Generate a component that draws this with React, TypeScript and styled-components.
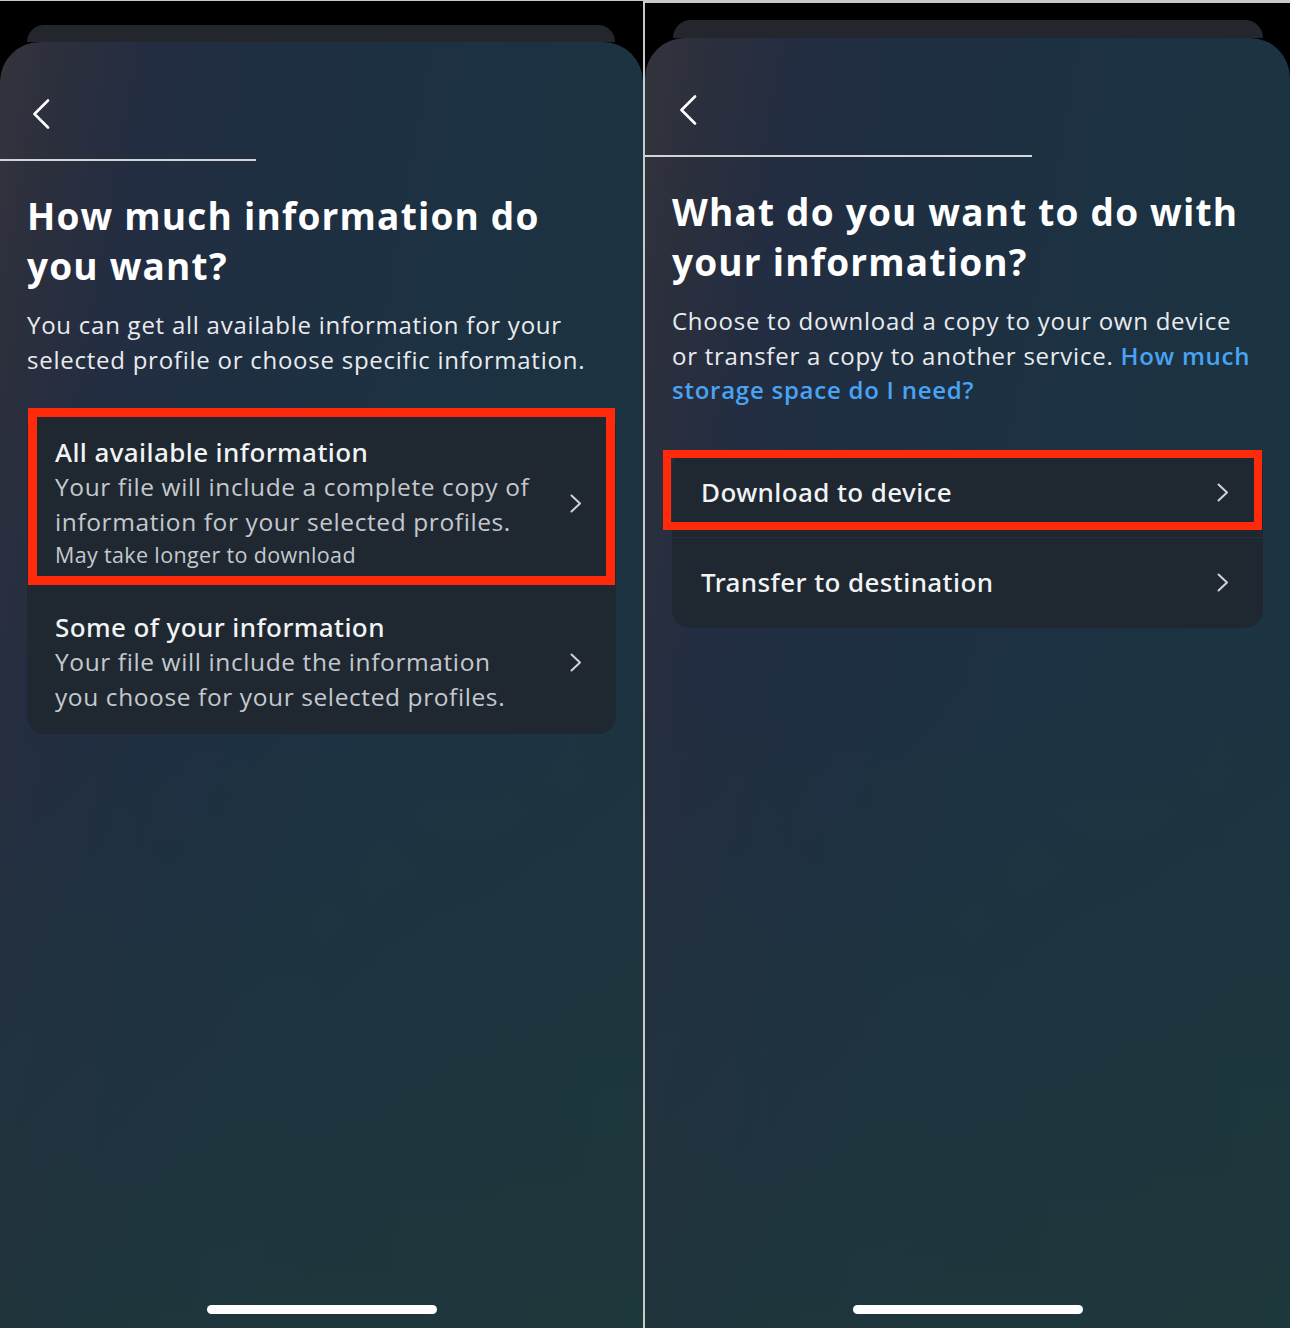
import React from "react";
import styled, { createGlobalStyle } from "styled-components";

const Global = createGlobalStyle`
  html, body { margin: 0; padding: 0; background: #c9c9c9; }
  body { font-family: "Open Sans", "Noto Sans", Arial, sans-serif; -webkit-font-smoothing: antialiased; }
`;

const Page = styled.main`
  display: flex;
  gap: 2px;
  width: 1290px;
  height: 1328px;
  background: #c9c9c9;
  overflow: hidden;
`;

const Panel = styled.section<{ $width: number; $top: number; $gapTop: number }>`
  width: ${(p) => p.$width}px;
  margin-top: ${(p) => p.$top}px;
  display: flex;
  flex-direction: column;
  background: #000;
  padding-top: ${(p) => p.$gapTop}px;
  box-sizing: border-box;
`;

const BackSheet = styled.div<{ $left: number; $right: number; $h: number }>`
  height: ${(p) => p.$h}px;
  margin: 0 ${(p) => p.$right}px 0 ${(p) => p.$left}px;
  background: #23272d;
  border-radius: 18px 18px 0 0;
`;

const Sheet = styled.div`
  flex: 1;
  display: flex;
  flex-direction: column;
  border-radius: 40px 40px 0 0;
  overflow: hidden;
  background:
    linear-gradient(180deg, rgba(0, 0, 0, 0) 50%, rgba(32, 62, 52, 0.4) 100%),
    linear-gradient(100deg, #33343c 0%, #2b2f3d 8%, #232d41 18%, #1e2f42 36%, #1c3242 60%, #1c3440 100%);
`;

const Header = styled.div<{ $left: number }>`
  height: 28px;
  padding: 58px 0 0 ${(p) => p.$left}px;
  display: flex;
  align-items: center;
`;

const Progress = styled.div<{ $width: number }>`
  width: ${(p) => p.$width}px;
  height: 2px;
  margin-top: 31px;
  background: #d4d4d4;
`;

const Content = styled.div`
  padding: 0 27px 0 27px;
  display: flex;
  flex-direction: column;
`;

const Title = styled.h1`
  margin: 30px 0 0 0;
  font-size: 37px;
  line-height: 50px;
  font-weight: 700;
  color: #ffffff;
  letter-spacing: 1.2px;
`;

const Subtitle = styled.p`
  margin: 17px 0 0 0;
  font-size: 24px;
  line-height: 34.5px;
  color: #e9ebee;
  letter-spacing: 0.75px;
`;

const Link = styled.span`
  color: #4aa3f2;
  font-weight: 600;
`;

const Card = styled.div<{ $gap: number }>`
  margin-top: ${(p) => p.$gap}px;
  background: #1f2830;
  border-radius: 18px;
  display: flex;
  flex-direction: column;
`;

const Row = styled.div<{ $pad: string; $divider?: boolean }>`
  position: relative;
  display: flex;
  align-items: center;
  justify-content: space-between;
  padding: ${(p) => p.$pad};
  border-top: ${(p) => (p.$divider ? "1px solid rgba(255,255,255,0.035)" : "none")};
`;

const RowText = styled.div`
  display: flex;
  flex-direction: column;
`;

const RowTitle = styled.div`
  font-family: "Noto Sans", "Open Sans", Arial, sans-serif;
  font-size: 26px;
  line-height: 35px;
  font-weight: 500;
  color: #f2f3f5;
  letter-spacing: 0.4px;
`;

const RowDesc = styled.div`
  font-size: 24.5px;
  line-height: 34.5px;
  color: #c4c8ce;
  letter-spacing: 0.6px;
`;

const RowNote = styled.div`
  font-size: 21.5px;
  line-height: 32px;
  color: #c4c8ce;
  letter-spacing: 0.35px;
`;

const Highlight = styled.div<{ $t: number; $r: number; $b: number; $l: number; $w: number }>`
  position: absolute;
  top: ${(p) => p.$t}px;
  right: ${(p) => p.$r}px;
  bottom: ${(p) => p.$b}px;
  left: ${(p) => p.$l}px;
  border: ${(p) => p.$w}px solid #ff2a0a;
  pointer-events: none;
`;

const HomeBar = styled.div`
  margin: auto auto 14px auto;
  width: 230px;
  height: 9px;
  border-radius: 5px;
  background: #ffffff;
`;

const BackIcon = () => (
  <svg width="18" height="30" viewBox="0 0 18 30" fill="none">
    <polyline points="16,1.5 2.5,15 16,28.5" stroke="#ffffff" strokeWidth="2.6" strokeLinecap="round" strokeLinejoin="round" />
  </svg>
);

const Chevron = () => (
  <svg width="12" height="19" viewBox="0 0 12 19" fill="none">
    <polyline points="1.5,1.5 10,9.5 1.5,17.5" stroke="#cfd2d6" strokeWidth="2" strokeLinecap="round" strokeLinejoin="round" />
  </svg>
);

export default function App() {
  return (
    <>
      <Global />
      <Page>
        <Panel $width={643} $top={1} $gapTop={24}>
          <BackSheet $left={27} $right={28} $h={17} />
          <Sheet>
            <Header $left={32}>
              <BackIcon />
            </Header>
            <Progress $width={256} />
            <Content>
              <Title>
                How much information do
                <br />
                you want?
              </Title>
              <Subtitle>
                You can get all available information for your
                <br />
                selected profile or choose specific information.
              </Subtitle>
              <Card $gap={32}>
                <Row $pad="26px 34px 14px 28px">
                  <RowText>
                    <RowTitle>All available information</RowTitle>
                    <RowDesc>
                      Your file will include a complete copy of
                      <br />
                      information for your selected profiles.
                    </RowDesc>
                    <RowNote>May take longer to download</RowNote>
                  </RowText>
                  <Chevron />
                  <Highlight $t={-1} $r={1} $b={0} $l={1} $w={9} />
                </Row>
                <Row $pad="25px 34px 20px 28px">
                  <RowText>
                    <RowTitle>Some of your information</RowTitle>
                    <RowDesc>
                      Your file will include the information
                      <br />
                      you choose for your selected profiles.
                    </RowDesc>
                  </RowText>
                  <Chevron />
                </Row>
              </Card>
            </Content>
            <HomeBar />
          </Sheet>
        </Panel>
        <Panel $width={645} $top={3} $gapTop={17}>
          <BackSheet $left={28} $right={27} $h={18} />
          <Sheet>
            <Header $left={34}>
              <BackIcon />
            </Header>
            <Progress $width={387} />
            <Content>
              <Title>
                What do you want to do with
                <br />
                your information?
              </Title>
              <Subtitle>
                Choose to download a copy to your own device
                <br />
                or transfer a copy to another service. <Link>How much</Link>
                <br />
                <Link>storage space do I need?</Link>
              </Subtitle>
              <Card $gap={42}>
                <Row $pad="25px 34px 27px 29px">
                  <RowTitle>Download to device</RowTitle>
                  <Chevron />
                  <Highlight $t={0} $r={1} $b={7} $l={-9} $w={8} />
                </Row>
                <Row $pad="27px 34px 28px 29px" $divider>
                  <RowTitle>Transfer to destination</RowTitle>
                  <Chevron />
                </Row>
              </Card>
            </Content>
            <HomeBar />
          </Sheet>
        </Panel>
      </Page>
    </>
  );
}
